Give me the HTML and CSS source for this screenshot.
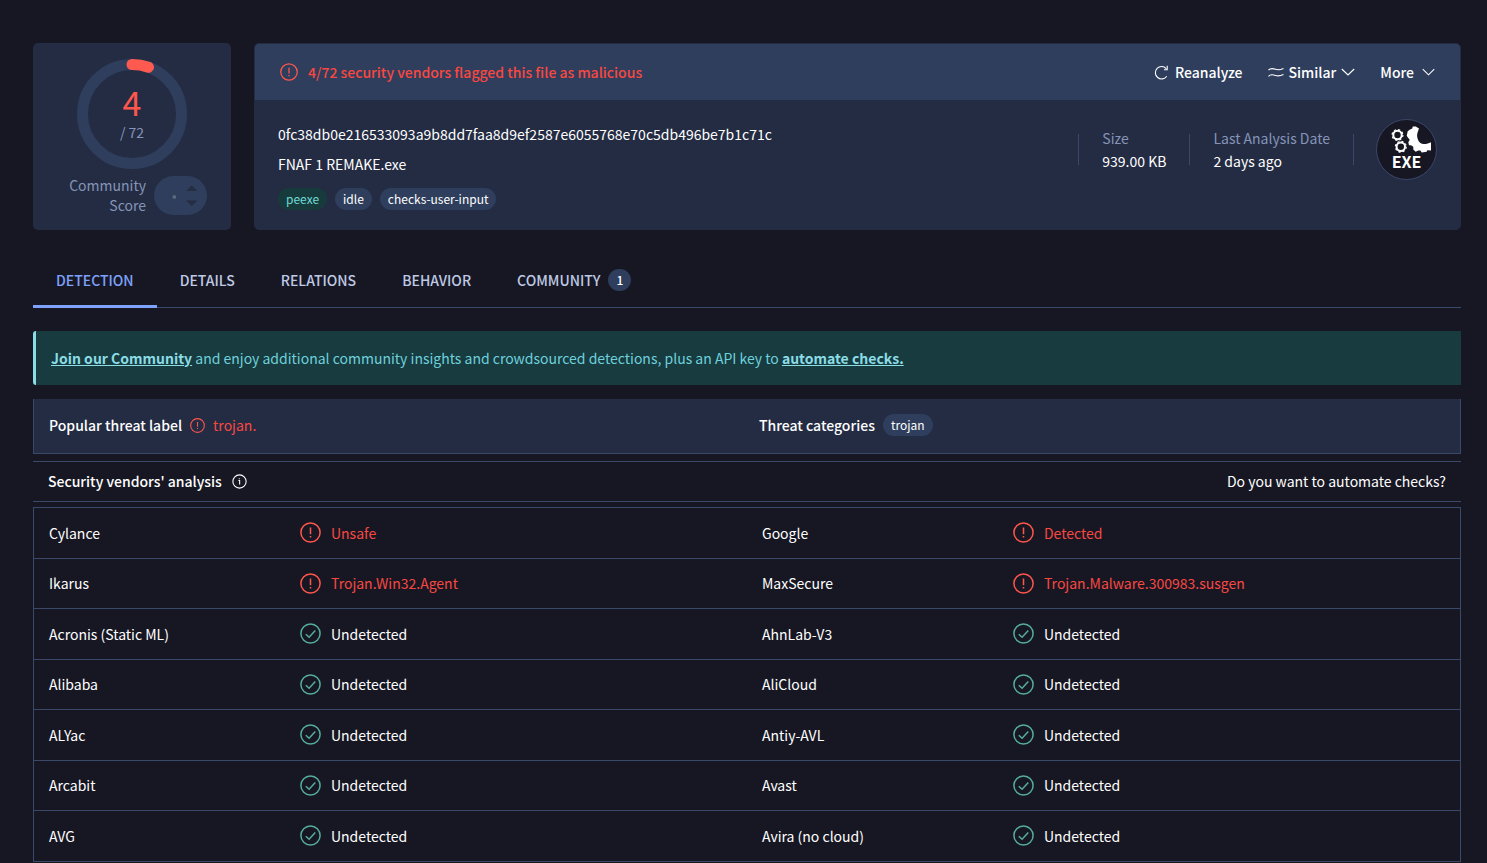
FILE: index.html
```html
<!DOCTYPE html>
<html lang="en">
<head>
<meta charset="utf-8">
<meta name="viewport" content="width=device-width, initial-scale=1">
<title>File report</title>
<link rel="stylesheet" href="styles.css">
</head>
<body>
<svg class="defs" aria-hidden="true">
  <symbol id="alert" viewBox="0 0 21 21"><circle cx="10.5" cy="10.5" r="9.6"/><path d="M10.5 5.5v6.7M10.5 14v1.5"/></symbol>
  <symbol id="check" viewBox="0 0 21 21"><circle cx="10.5" cy="10.5" r="9.6"/><path d="M5.8 11.2l3.3 3.1 6.2-6.8"/></symbol>
  <symbol id="info" viewBox="0 0 21 21"><circle cx="10.5" cy="10.5" r="9.3"/><path d="M9 9.2h1.7v5.6M10.2 6v1.5"/></symbol>
  <symbol id="down" viewBox="0 0 14 8"><path d="M.8 1L7 7l6.2-6"/></symbol>
</svg>
<main class="page">
  <section class="summary">
    <div class="card score">
      <div class="ring">
        <svg class="ring-art" viewBox="0 0 110 110" aria-hidden="true">
          <circle class="track" cx="55" cy="55" r="49.5"/>
          <path class="arc" d="M55 5.5A49.500 49.500 0 0 1 71.500 8.300"/>
        </svg>
        <div class="ring-text"><span class="hits">4</span><span class="total">/ 72</span></div>
      </div>
      <div class="community">
        <span class="community-label">Community Score</span>
        <span class="votes">
          <svg width="53" height="39" viewBox="0 0 53 39" aria-hidden="true"><circle class="dot" cx="20.300" cy="21" r="1.900"/><path class="tri" d="M32 15l5.700-5.600L43.400 15zM32 24.500l5.700 5.600 5.700-5.600z"/></svg>
        </span>
      </div>
    </div>
    <div class="card file">
      <header class="file-head">
        <svg class="icon i18"><use href="#alert"/></svg>
        <strong class="verdict">4/72 security vendors flagged this file as malicious</strong>
        <div class="actions">
          <button type="button"><svg class="line" width="14" height="15" viewBox="0 0 14 15"><path d="M12.700 11.200A6.200 6.200 0 1 1 12.200 3.600M13.200 .8v3.900H10"/></svg>Reanalyze</button>
          <button type="button" class="similar"><svg class="line" width="16" height="11" viewBox="0 0 16 11"><path d="M.5 3.200C2.500.800 4.500 1.200 7.500 2.300S12.500 2.800 15.500 1.500M.5 9.300C2.500 6.900 4.500 7.300 7.500 8.400S12.500 8.900 15.500 7.600"/></svg>Similar<svg class="line" width="14" height="8"><use href="#down"/></svg></button>
          <button type="button" class="more">More<svg class="line" width="13" height="8"><use href="#down"/></svg></button>
        </div>
      </header>
      <div class="file-body">
        <div class="identity">
          <div class="hash">0fc38db0e216533093a9b8dd7faa8d9ef2587e6055768e70c5db496be7b1c71c</div>
          <div class="filename">FNAF 1 REMAKE.exe</div>
          <div class="tags"><a href="#" class="tag green">peexe</a><a href="#" class="tag">idle</a><a href="#" class="tag">checks-user-input</a></div>
        </div>
        <div class="facts">
          <div class="fact"><span class="fact-label">Size</span><span>939.00 KB</span></div>
          <div class="fact"><span class="fact-label">Last Analysis Date</span><span>2 days ago</span></div>
          <div class="fact type">
            <svg width="61" height="61" viewBox="0 0 61 61" role="img" aria-label="EXE">
              <circle class="disc" cx="30.500" cy="30.500" r="30"/>
              <circle class="gear" cx="21.500" cy="16" r="4.200"/><circle class="teeth" cx="21.500" cy="16" r="5.400"/>
              <circle class="gear" cx="24.800" cy="27.700" r="4.200"/><circle class="teeth" cx="24.800" cy="27.700" r="5.400"/>
              <path class="fill" d="M31.700 12.200L34 10.500l2.300-1 .4-2h3L43 9.500l-1.500 4.300c-1 3 0 5.500.8 7.700 1 2 2.500 3 4 3.300 3 .6 6-.4 8.700-1.600v8.300l-3.700-.3-.6 1.600-5 .7-1.400-2h-2l-2.600 1.300-2.400-2.300v-2.700L35 26.200h-2l-.7-3 1.400-2.400-2-2.600-1-1.400z"/>
              <text class="exe" x="30.500" y="49" text-anchor="middle">EXE</text>
            </svg>
          </div>
        </div>
      </div>
    </div>
  </section>

  <nav class="tabs">
    <a href="#" class="tab active" aria-current="page">DETECTION</a>
    <a href="#" class="tab">DETAILS</a>
    <a href="#" class="tab">RELATIONS</a>
    <a href="#" class="tab">BEHAVIOR</a>
    <a href="#" class="tab">COMMUNITY<span class="count">1</span></a>
  </nav>

  <p class="banner"><a href="#">Join our Community</a> and enjoy additional community insights and crowdsourced detections, plus an API key to <a href="#">automate checks.</a></p>

  <section class="threat">
    <div class="threat-item"><strong>Popular threat label</strong><svg class="icon i15"><use href="#alert"/></svg><span class="bad">trojan.</span></div>
    <div class="threat-item"><strong>Threat categories</strong><span class="tag">trojan</span></div>
  </section>

  <section class="analysis">
    <h2>Security vendors' analysis</h2>
    <svg class="icon i15 info"><use href="#info"/></svg>
    <a href="#" class="automate">Do you want to automate checks?</a>
  </section>

  <table class="vendors">
    <colgroup><col class="c-name"><col class="c-result"><col class="c-name"><col class="c-result"></colgroup>
    <tbody>
      <tr><th scope="row">Cylance</th><td><span class="result bad"><svg class="icon i21"><use href="#alert"/></svg>Unsafe</span></td><th scope="row">Google</th><td><span class="result bad"><svg class="icon i21"><use href="#alert"/></svg>Detected</span></td></tr>
      <tr><th scope="row">Ikarus</th><td><span class="result bad"><svg class="icon i21"><use href="#alert"/></svg>Trojan.Win32.Agent</span></td><th scope="row">MaxSecure</th><td><span class="result bad"><svg class="icon i21"><use href="#alert"/></svg>Trojan.Malware.300983.susgen</span></td></tr>
      <tr><th scope="row">Acronis (Static ML)</th><td><span class="result"><svg class="icon i21 ok"><use href="#check"/></svg>Undetected</span></td><th scope="row">AhnLab-V3</th><td><span class="result"><svg class="icon i21 ok"><use href="#check"/></svg>Undetected</span></td></tr>
      <tr><th scope="row">Alibaba</th><td><span class="result"><svg class="icon i21 ok"><use href="#check"/></svg>Undetected</span></td><th scope="row">AliCloud</th><td><span class="result"><svg class="icon i21 ok"><use href="#check"/></svg>Undetected</span></td></tr>
      <tr><th scope="row">ALYac</th><td><span class="result"><svg class="icon i21 ok"><use href="#check"/></svg>Undetected</span></td><th scope="row">Antiy-AVL</th><td><span class="result"><svg class="icon i21 ok"><use href="#check"/></svg>Undetected</span></td></tr>
      <tr><th scope="row">Arcabit</th><td><span class="result"><svg class="icon i21 ok"><use href="#check"/></svg>Undetected</span></td><th scope="row">Avast</th><td><span class="result"><svg class="icon i21 ok"><use href="#check"/></svg>Undetected</span></td></tr>
      <tr><th scope="row">AVG</th><td><span class="result"><svg class="icon i21 ok"><use href="#check"/></svg>Undetected</span></td><th scope="row">Avira (no cloud)</th><td><span class="result"><svg class="icon i21 ok"><use href="#check"/></svg>Undetected</span></td></tr>
    </tbody>
  </table>
</main>
</body>
</html>
```
FILE: styles.css
```css
:root {
  --bg: #171723;
  --card: #242c43;
  --raised: #2e3e5c;
  --line: #3a486a;
  --muted: #8594b8;
  --red: #ff564c;
  --red-text: #f94842;
  --teal: #8adce5;
}
* { box-sizing: border-box; }
body {
  margin: 0;
  background: var(--bg);
  color: #fff;
  font: 14px/20px "Noto Sans CJK SC", "Noto Sans", sans-serif;
}
a { color: inherit; text-decoration: none; }
strong { font-weight: 500; }
.defs { display: none; }
.page { padding: 43px 26px 0 33px; }

.icon { flex: none; fill: none; stroke: var(--red); stroke-width: 1.5; }
.i15 { width: 15px; height: 15px; }
.i18 { width: 18px; height: 18px; }
.i21 { width: 21px; height: 21px; }
.info { stroke: #fff; }
.ok { stroke: #55ad9c; }
.bad { color: var(--red-text); }

.summary { display: flex; gap: 23px; }
.card { background: var(--card); border-radius: 5px; overflow: hidden; }
.score {
  flex: none;
  width: 198px;
  padding: 16px 0 14px;
  display: flex;
  flex-direction: column;
  align-items: center;
  gap: 6px;
}
.ring { display: grid; width: 110px; height: 110px; }
.ring-art, .ring-text { grid-area: 1 / 1; }
.ring-art { fill: none; stroke-width: 11; }
.track { stroke: var(--raised); }
.arc { stroke: #ff5a50; stroke-linecap: round; }
.ring-text {
  display: flex;
  flex-direction: column;
  align-items: center;
  justify-content: center;
  padding-bottom: 5px;
}
.hits { font-size: 34px; line-height: 40px; color: var(--red); }
.total { color: var(--muted); }
.community { display: flex; align-items: center; gap: 8px; padding-left: 9px; }
.community-label { width: 80px; text-align: right; color: var(--muted); }
.votes { display: flex; background: var(--raised); border-radius: 20px; }
.dot { fill: #5c687c; }
.tri { fill: #252d43; }

.file { flex: 1; min-width: 0; border: 1px solid var(--card); }
.file-head {
  display: flex;
  align-items: center;
  height: 56px;
  padding: 0 25px;
  gap: 10px;
  background: var(--raised);
}
.verdict { color: var(--red-text); }
.actions { display: flex; gap: 25px; margin-left: auto; }
.actions button {
  display: flex;
  align-items: center;
  gap: 7px;
  padding: 0;
  border: 0;
  background: none;
  color: #fff;
  font: inherit;
  font-weight: 500;
}
.actions .similar { gap: 5px; }
.actions .more { gap: 8px; }
.line { fill: none; stroke: #fff; stroke-width: 1.1; }
.file-body { display: flex; justify-content: space-between; padding: 19px 23px; }
.identity { display: flex; flex-direction: column; gap: 10px; padding-top: 5px; }
.tags { display: flex; gap: 8px; padding-top: 4px; }
.tag {
  padding: 1px 8px;
  border-radius: 11px;
  background: var(--raised);
  font-size: 12px;
}
.green { background: #173b3d; color: #6fd9d3; }
.facts { display: flex; align-items: flex-start; }
.fact {
  position: relative;
  display: flex;
  flex-direction: column;
  gap: 3px;
  padding: 9px 23px 0 24px;
}
.fact::before {
  content: "";
  position: absolute;
  left: 0;
  top: 15px;
  height: 31px;
  border-left: 1px solid var(--line);
}
.type { padding: 0 0 0 23px; }
.fact-label { color: var(--muted); }
.disc { fill: var(--bg); stroke: var(--line); }
.gear { fill: none; stroke: #fff; stroke-width: 2; }
.teeth { fill: none; stroke: #fff; stroke-width: 1.2; stroke-dasharray: 2.1 2.14; }
.fill { fill: #fff; }
.exe { fill: #fff; font-size: 16px; font-weight: 700; }

.tabs {
  display: flex;
  margin-top: 25px;
  border-bottom: 1px solid var(--line);
}
.tab {
  display: flex;
  align-items: center;
  gap: 8px;
  height: 53px;
  margin-bottom: -1px;
  padding: 0 23px;
  color: #bfc9e4;
  font-weight: 500;
  border-bottom: 3px solid transparent;
}
.active { color: #7ea2fb; border-color: #7ea2fb; }
.count {
  padding: 1px 8px;
  border-radius: 11px;
  background: var(--raised);
  color: #fff;
  font-size: 12px;
}

.banner {
  margin: 23px 0 14px;
  padding: 17px 15px;
  background: #173b3f;
  border-left: 3px solid var(--teal);
  border-radius: 3px 0 0 3px;
  color: #6fd0dc;
}
.banner a { color: var(--teal); font-weight: 700; text-decoration: underline; }

.threat {
  display: grid;
  grid-template-columns: 1fr 1fr;
  gap: 24px;
  padding: 15px 15px 17px;
  background: var(--card);
  border: 1px solid var(--line);
  border-top: 0;
}
.threat-item { display: flex; align-items: center; gap: 8px; }

.analysis {
  display: flex;
  align-items: center;
  gap: 10px;
  margin: 7px 0 5px;
  padding: 9px 15px 10px;
  border-top: 1px solid var(--line);
  border-bottom: 1px solid var(--line);
}
.analysis h2 { margin: 0; font-size: 14px; line-height: 20px; font-weight: 500; }
.automate { margin-left: auto; }

.vendors {
  width: 100%;
  table-layout: fixed;
  border-spacing: 0;
  border: 1px solid var(--line);
  border-bottom: 0;
}
.c-name { width: 17.6%; }
.c-result { width: 32.4%; }
.vendors th, .vendors td {
  height: 50px;
  padding: 0 15px 1px;
  border-bottom: 1px solid var(--line);
  text-align: left;
  font-weight: 400;
}
.vendors tr:nth-child(odd) > * { height: 51px; }
.result { display: flex; align-items: center; gap: 10px; }
```
